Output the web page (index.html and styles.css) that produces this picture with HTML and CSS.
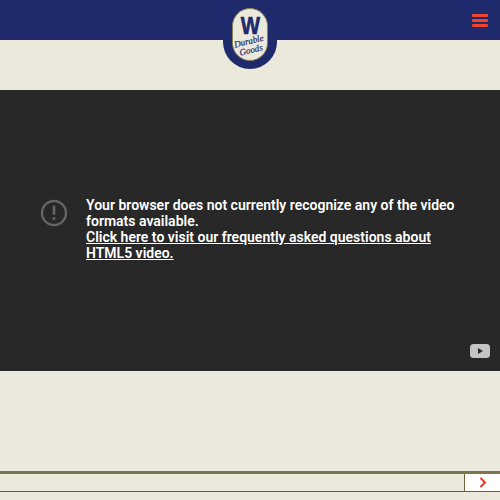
FILE: index.html
```html
<!DOCTYPE html>
<html lang="en">
<head>
  <meta charset="UTF-8" />
  <title>Durable Goods</title>
  <link rel="stylesheet" href="styles.css">
</head>
<body>
  <header class="site-header">
    <a class="logo" href="#">
      <span class="logo-inner">
        <span class="logo-w">W</span>
        <span class="logo-script">Durable<br>Goods</span>
      </span>
    </a>
    <button class="menu-btn" aria-label="Menu">
      <span></span><span></span><span></span>
    </button>
  </header>

  <main class="page">
    <section class="video">
      <div class="video-error">
        <svg class="error-icon" width="28" height="28" viewBox="0 0 28 28">
          <circle cx="14" cy="14" r="12" fill="none" stroke="#666" stroke-width="2.4"/>
          <rect x="12.7" y="6.5" width="2.6" height="9.5" rx="1" fill="#666"/>
          <circle cx="14" cy="19.4" r="1.5" fill="#666"/>
        </svg>
        <p class="error-text">
          Your browser does not currently recognize any of the video formats available.<br>
          <a href="#">Click here to visit our frequently asked questions about HTML5 video.</a>
        </p>
      </div>
      <svg class="yt-mark" width="20" height="14" viewBox="0 0 20 14">
        <rect width="20" height="14" rx="3.5" fill="#c4c4c4"/>
        <polygon points="8,4 13,7 8,10" fill="#2a2a2a"/>
      </svg>
    </section>
  </main>

  <footer class="pager">
    <div class="pager-track"></div>
    <button class="pager-next" aria-label="Next">
      <svg width="8" height="11" viewBox="0 0 8 11">
        <polyline points="1.5,1 6,5.5 1.5,10" fill="none" stroke="#e8392b" stroke-width="2"/>
      </svg>
    </button>
  </footer>
</body>
</html>
```
FILE: styles.css
```css
* {
  box-sizing: border-box;
}

html, body {
  height: 100%;
}

body {
  margin: 0;
  background: #ebe8dc;
  font-family: Roboto, sans-serif;
  display: flex;
  flex-direction: column;
  overflow: hidden;
}

.site-header {
  position: relative;
  height: 40px;
  flex: none;
  background: #1f2a6d;
}

.logo {
  position: absolute;
  top: 0;
  left: 223px;
  width: 54px;
  height: 69px;
  padding: 8px 9px 8px;
  background: #1f2a6d;
  border-radius: 0 0 27px 27px;
  text-decoration: none;
  display: block;
}

.logo-inner {
  display: flex;
  flex-direction: column;
  align-items: center;
  height: 100%;
  padding-top: 7px;
  background: #ebe8dc;
  border: 1px solid #8a7f55;
  border-radius: 18px;
  color: #1f2a6d;
}

.logo-w {
  font-family: "Liberation Sans", sans-serif;
  font-weight: 700;
  font-size: 24px;
  line-height: 19px;
  transform: scaleX(0.85);
  -webkit-text-stroke: 0.7px #1f2a6d;
}

.logo-script {
  margin-top: 2px;
  font-family: "Liberation Serif", serif;
  font-style: italic;
  font-size: 9px;
  line-height: 9px;
  text-align: center;
  transform: rotate(-14deg);
  -webkit-text-stroke: 0.2px #1f2a6d;
}

.menu-btn {
  position: absolute;
  top: 14px;
  right: 12px;
  width: 16px;
  padding: 0;
  border: none;
  background: none;
  display: flex;
  flex-direction: column;
  gap: 2px;
}

.menu-btn span {
  display: block;
  height: 3px;
  background: #f0432a;
  border-radius: 1px;
}

.page {
  flex: 1;
  padding-top: 50px;
}

.video {
  position: relative;
  height: 281px;
  background: #282828;
  display: flex;
  align-items: center;
}

.video-error {
  display: flex;
  align-items: flex-start;
  padding: 0 40px;
  width: 100%;
  margin-top: -4px;
}

.error-icon {
  flex: none;
  margin-top: 2px;
}

.error-text {
  margin: 0 0 0 18px;
  color: #fff;
  font-size: 14px;
  font-weight: 600;
  line-height: 16px;
}

.error-text a {
  color: #fff;
  text-decoration: underline;
}

.yt-mark {
  position: absolute;
  right: 10px;
  bottom: 13px;
}

.pager {
  flex: none;
  height: 21px;
  margin-bottom: 8px;
  border-top: 3px solid #7d7350;
  border-bottom: 1px solid #6e6238;
  display: flex;
}

.pager-track {
  flex: 1;
}

.pager-next {
  width: 36px;
  padding: 0;
  border: none;
  border-left: 1px solid #6e6238;
  background: #fff;
  display: flex;
  align-items: center;
  justify-content: center;
}
```
